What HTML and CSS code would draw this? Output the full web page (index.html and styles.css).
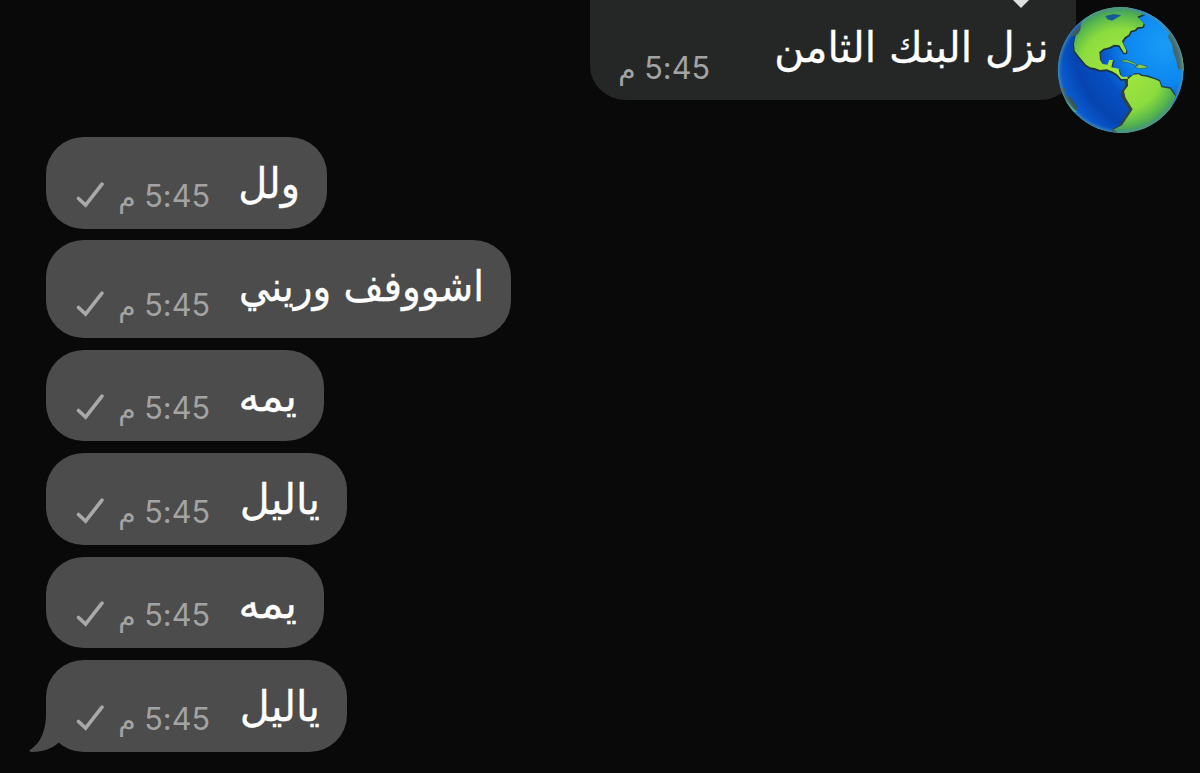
FILE: index.html
```
<!DOCTYPE html>
<html lang="ar">
<head>
    <meta charset="UTF-8">
    <title>دردشة</title>
    <link rel="stylesheet" href="styles.css">
</head>
<body>
<svg class="defs" width="0" height="0">
    <symbol id="check" viewBox="0 0 30 28">
        <path d="M2.5 17.5 L9.6 24 L26 3.2" fill="none" stroke="currentColor" stroke-width="3.6" stroke-linecap="round" stroke-linejoin="miter"/>
    </symbol>
</svg>
<div class="chat">
    <div class="incoming">
        <div class="msg in">
            <span class="time" dir="rtl">5:45 <i>م</i></span>
            <span class="text t-bank" dir="rtl">نزل البنك الثامن</span>
            <span class="pointer"></span>
        </div>
        <svg class="avatar" viewBox="48 18 384 384">
            <defs>
                <radialGradient id="sea" cx="0.85" cy="0.3" r="0.9">
                    <stop offset="0" stop-color="#1a9cf6"/>
                    <stop offset="0.35" stop-color="#0c86f0"/>
                    <stop offset="0.58" stop-color="#0650c4"/>
                    <stop offset="0.8" stop-color="#0644b0"/>
                    <stop offset="1" stop-color="#0a62d8"/>
                </radialGradient>
                <radialGradient id="land" gradientUnits="userSpaceOnUse" cx="242" cy="210" r="190">
                    <stop offset="0" stop-color="#a6e83e"/>
                    <stop offset="0.65" stop-color="#8cdc3e"/>
                    <stop offset="0.85" stop-color="#5cba4c"/>
                    <stop offset="1" stop-color="#3c9460"/>
                </radialGradient>
                <radialGradient id="rim">
                    <stop offset="0.93" stop-color="#4a8c9c" stop-opacity="0"/>
                    <stop offset="1" stop-color="#5a9aa4" stop-opacity="0.7"/>
                </radialGradient>
                <clipPath id="ball"><circle cx="242" cy="210" r="189"/></clipPath>
                <path id="north" d="M106 110 L118 84 L126 64 L160 36 L205 20 L250 16 L300 34 L312 42 L292 50 L302 60 L311 70 L308 80 L292 82 L284 90 L272 92 L266 104 L254 112 L246 124 L258 150 L258 158 L252 158 L238 136 L222 134 L208 142 L190 146 L178 156 L180 180 L188 192 L202 194 L208 180 L219 180 L214 202 L236 206 L240 224 L248 231 L262 230 L264 236 L244 237 L230 222 L216 214 L200 208 L180 210 L164 204 L150 202 L138 194 L126 180 L114 166 L104 152 L102 132 Z"/>
                <path id="south" d="M264 238 L280 224 L296 223 L304 228 L320 230 L344 238 L358 244 L364 262 L390 266 L407 290 L390 330 L350 370 L300 396 L240 406 L222 388 L246 376 L262 352 L278 328 L268 312 L256 292 L252 274 L264 258 Z"/>
            </defs>
            <g clip-path="url(#ball)">
                <circle cx="242" cy="210" r="189" fill="url(#sea)"/>
                <use href="#north" x="4" y="4" fill="#253d4a"/>
                <use href="#north" x="-2" y="5" fill="#1c3438"/>
                <use href="#south" x="-10" y="2" fill="#33423f"/>
                <use href="#south" x="2" y="-4" fill="#24424c"/>
                <use href="#north" fill="url(#land)"/>
                <use href="#south" fill="url(#land)"/>
                <path d="M196 48 L222 42 L244 46 L230 54 L216 62 L202 58 Z" fill="#155c96"/>
                <path d="M104 92 L124 76 L120 92 L112 104 L92 112 Z" fill="#3c5a5c"/>
                <path d="M246 180 L262 180 L286 190 L294 198 L262 187 L246 185 Z M284 202 L298 192 L318 198 L322 204 L300 206 Z" fill="#82cc50" stroke="#24576b" stroke-width="2"/>
                <path d="M366 68 L388 98 L384 112 L396 132 L400 158 L408 178 L414 208 L440 212 L432 130 Z" fill="#46686a"/>
                <path d="M372 72 L396 90 L420 136 L429 212 L440 210 L436 110 L380 60 Z" fill="#7f9a4c"/>
                <path d="M50 258 L74 264 L78 284 L96 296 L114 324 L104 334 L76 306 Z" fill="#34565a"/>
                <path d="M62 290 L80 304 L98 324 L110 336 L90 340 Z" fill="#56b878"/>
                <circle cx="242" cy="210" r="189" fill="url(#rim)"/>
            </g>
        </svg>
    </div>
    <div class="outgoing">
        <div class="msg out">
            <svg class="check"><use href="#check"/></svg>
            <span class="time" dir="rtl">5:45 <i>م</i></span>
            <span class="text t-wall" dir="rtl">ولل</span>
        </div>
        <div class="msg out tall">
            <svg class="check"><use href="#check"/></svg>
            <span class="time" dir="rtl">5:45 <i>م</i></span>
            <span class="text t-show" dir="rtl">اشووفف وريني</span>
        </div>
        <div class="msg out">
            <svg class="check"><use href="#check"/></svg>
            <span class="time" dir="rtl">5:45 <i>م</i></span>
            <span class="text t-yumma" dir="rtl">يمه</span>
        </div>
        <div class="msg out">
            <svg class="check"><use href="#check"/></svg>
            <span class="time" dir="rtl">5:45 <i>م</i></span>
            <span class="text t-layl" dir="rtl">ياليل</span>
        </div>
        <div class="msg out">
            <svg class="check"><use href="#check"/></svg>
            <span class="time" dir="rtl">5:45 <i>م</i></span>
            <span class="text t-yumma" dir="rtl">يمه</span>
        </div>
        <div class="msg out">
            <svg class="check"><use href="#check"/></svg>
            <span class="time" dir="rtl">5:45 <i>م</i></span>
            <span class="text t-layl" dir="rtl">ياليل</span>
            <svg class="tail" viewBox="0 0 40 50">
                <path d="M17 0 C18 22 14 36 1 45 Q-1 47 3 47 C15 47 23 43 28 39 L40 30 V0 Z" fill="#4c4c4c"/>
            </svg>
        </div>
    </div>
</div>
</body>
</html>
```
FILE: styles.css
```
body {
    margin: 0;
    background: #090909;
    overflow: hidden;
}

.defs {
    position: absolute;
}

.chat {
    width: 1200px;
    height: 773px;
    overflow: hidden;
}

.incoming {
    position: relative;
    height: 137px;
    padding-left: 590px;
}

.outgoing {
    display: flex;
    flex-direction: column;
    align-items: flex-start;
    gap: 11.9px;
    padding-left: 46px;
}

.msg {
    position: relative;
    display: flex;
    align-items: flex-start;
    box-sizing: border-box;
    height: 91.6px;
    padding: 0 27px 0 30px;
    border-radius: 38px / 37px;
}

.in {
    width: 486px;
    height: 100px;
    border-radius: 0 0 36px 36px / 0 0 34px 34px;
    background: #252726;
    justify-content: space-between;
}

.out {
    background: #4c4c4c;
}

.tall {
    height: 97.4px;
}

.text {
    font-family: "DejaVu Sans", sans-serif;
    font-size: 42px;
    line-height: 60px;
    color: #fff;
    white-space: nowrap;
    margin-top: 17px;
    transform-origin: right center;
    -webkit-text-stroke: 0.3px #fff;
}

.t-bank {
    margin-top: 18px;
    transform: scaleX(0.974);
}

.t-wall {
    width: 60px;
    transform: scaleX(0.95);
}

.t-show {
    width: 244px;
    transform: scaleX(0.922);
}

.t-yumma {
    width: 57px;
}

.t-layl {
    width: 80px;
    transform: scaleX(0.98);
}

.time {
    align-self: flex-end;
    width: 90px;
    margin: 0 30px 10px 0;
    font-family: Inter, "DejaVu Sans", sans-serif;
    font-size: 30.6px;
    line-height: 42px;
    letter-spacing: 0.1px;
    color: #a3a3a3;
    white-space: nowrap;
}

.in .time {
    margin-bottom: 9px;
}

.time i {
    font-family: "DejaVu Sans", sans-serif;
    font-style: normal;
    font-size: 28px;
}

.check {
    align-self: flex-end;
    width: 30px;
    height: 28px;
    margin: 0 14px 20px 0;
    color: #a9a9a9;
}

.pointer {
    position: absolute;
    left: 421px;
    top: -2px;
    border: 10px solid transparent;
    border-top-color: #dedede;
    border-bottom: 0;
}

.avatar {
    position: absolute;
    left: 1056px;
    top: 6px;
    width: 128px;
    height: 128px;
}

.tail {
    position: absolute;
    left: -17px;
    bottom: -3px;
    width: 40px;
    height: 50px;
}
```
